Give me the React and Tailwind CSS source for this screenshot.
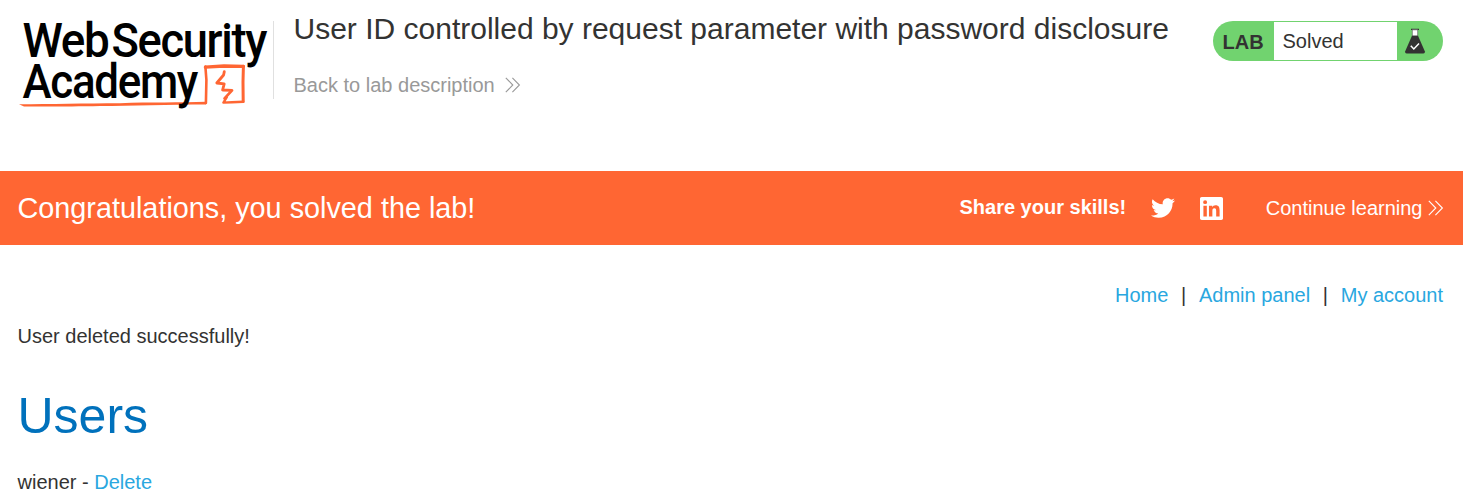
function DoubleChevron({ className }) {
  return (
    <svg className={className} width="16" height="16" viewBox="0 0 16 16" fill="none" stroke="currentColor" strokeWidth="1.1">
      <path d="M0.8 0.8 L7.8 8 L0.8 15.2" />
      <path d="M7.4 0.8 L14.4 8 L7.4 15.2" />
    </svg>
  );
}

function Logo() {
  return (
    <svg width="255" height="114" viewBox="18 0 255 114" className="block shrink-0">
      <g fill="none" stroke="#ff6633" strokeLinejoin="round" strokeLinecap="round">
        <path strokeWidth="2.6" d="M205.9 103 L206.4 80 L205.4 66.6" />
        <path strokeWidth="3.3" d="M205.4 67.2 L224 66 L243.4 66.3" />
        <path strokeWidth="3" d="M243.4 66.3 L243 82 L243.2 101.6" />
        <path strokeWidth="2.4" d="M243.2 101.8 L232 102.2 L223.4 102.6 L226.8 97.2" />
        <path strokeWidth="2.8" d="M224.3 71.6 L223.6 75 L216.8 83 L224.2 83.8 L222.6 90 L232 90.4 L224.6 98.4" />
      </g>
      <path fill="#ff6633" d="M19 104.2 C50 104 85 103.4 120 103.2 C150 102.2 180 102.6 206.5 101.8 L206 104.4 C170 104.4 130 106 100 106 C70 106.6 40 106.6 24 106.4 Z" />
      <g fontFamily="Roboto, sans-serif" fontWeight="500" fontSize="47.5" fill="#000">
        <text x="22.5" y="56.7" letterSpacing="-1.4" textLength="86" lengthAdjust="spacingAndGlyphs">Web</text>
        <text x="111.5" y="56.7" letterSpacing="-1.4" textLength="154.5" lengthAdjust="spacingAndGlyphs">Security</text>
        <text x="22.5" y="97.8" letterSpacing="-1.4" textLength="174.5" lengthAdjust="spacingAndGlyphs">Academy</text>
      </g>
    </svg>
  );
}

function Flask() {
  return (
    <svg width="22" height="26" viewBox="0 0 22 26" className="block">
      <path d="M7 1.4 H15" stroke="#333332" strokeWidth="1.2" />
      <path d="M8.3 1.8 H13.7 V8 H8.3 Z" fill="#fff" stroke="#666" strokeWidth="0.7" />
      <path d="M8 7.8 H14 L20.8 23.2 Q21.3 25.4 19.4 25.4 H2.6 Q0.7 25.4 1.2 23.2 Z" fill="#333332" />
      <path d="M6.8 17.8 L9.8 21 L15 15.4" fill="none" stroke="#fff" strokeWidth="1.5" />
    </svg>
  );
}

function Twitter() {
  return (
    <svg width="24" height="24" viewBox="0 0 24 24" fill="currentColor" className="block">
      <path d="M23.954 4.569c-.885.389-1.83.654-2.825.775 1.014-.611 1.794-1.574 2.163-2.723-.951.555-2.005.959-3.127 1.184-.896-.959-2.173-1.559-3.591-1.559-2.717 0-4.92 2.203-4.92 4.917 0 .39.045.765.127 1.124C7.691 8.094 4.066 6.13 1.64 3.161c-.427.722-.666 1.561-.666 2.475 0 1.71.87 3.213 2.188 4.096-.807-.026-1.566-.248-2.228-.616v.061c0 2.385 1.693 4.374 3.946 4.827-.413.111-.849.171-1.296.171-.314 0-.615-.03-.916-.086.631 1.953 2.445 3.377 4.604 3.417-1.68 1.319-3.809 2.105-6.102 2.105-.39 0-.779-.023-1.17-.067 2.189 1.394 4.768 2.209 7.557 2.209 9.054 0 13.999-7.496 13.999-13.986 0-.209 0-.42-.015-.63.961-.689 1.8-1.56 2.46-2.548l-.047-.02z" />
    </svg>
  );
}

function LinkedIn() {
  return (
    <svg width="23" height="23" viewBox="0 0 24 24" fill="currentColor" className="block">
      <path d="M20.447 20.452h-3.554v-5.569c0-1.328-.027-3.037-1.852-3.037-1.853 0-2.136 1.445-2.136 2.939v5.667H9.351V9h3.414v1.561h.046c.477-.9 1.637-1.85 3.37-1.85 3.601 0 4.267 2.37 4.267 5.455v6.286zM5.337 7.433a2.062 2.062 0 0 1-2.063-2.065 2.064 2.064 0 1 1 2.063 2.065zm1.782 13.019H3.555V9h3.564v11.452zM22.225 0H1.771C.792 0 0 .774 0 1.729v20.542C0 23.227.792 24 1.771 24h20.451C23.2 24 24 23.227 24 22.271V1.729C24 .774 23.2 0 22.222 0h.003z" />
    </svg>
  );
}

export default function App() {
  return (
    <div className="h-[503px] w-[1463px] overflow-hidden bg-white font-['Liberation_Sans',Arial,sans-serif] text-[20px] leading-6 text-[#333332]">
      <header className="flex h-[171px] items-start pl-[18px] pr-5">
        <Logo />
        <div className="mt-[21px] h-[78px] w-px bg-[#e0e0e0]" />
        <div className="ml-[19.5px] flex-1 whitespace-nowrap pt-[11px]">
          <h1 className="text-[30px] leading-9">User ID controlled by request parameter with password disclosure</h1>
          <a className="mt-[26px] flex items-center text-[#999999]">
            Back to lab description
            <DoubleChevron className="ml-[10px]" />
          </a>
        </div>
        <div className="mt-[21px] flex h-10 w-[230px] shrink-0 overflow-hidden rounded-[20px] bg-[#71d36f]">
          <div className="w-[61px] pl-[9.5px] pt-[9px] font-bold">LAB</div>
          <div className="my-px w-[123px] bg-white pl-[8.5px] pt-[7px]">Solved</div>
          <div className="pl-[7px] pt-[7px]">
            <Flask />
          </div>
        </div>
      </header>

      <section className="flex h-[74px] items-center bg-[#ff6633] pl-[17.5px] pr-[19px] text-white">
        <p className="flex-1 text-[28.8px]">Congratulations, you solved the lab!</p>
        <span className="-mt-0.5 font-bold">Share your skills!</span>
        <a className="ml-[25px]">
          <Twitter />
        </a>
        <a className="ml-[24.5px]">
          <LinkedIn />
        </a>
        <a className="ml-[43px] flex items-center">
          Continue learning
          <DoubleChevron className="ml-[5.5px]" />
        </a>
      </section>

      <nav className="flex justify-end whitespace-pre pr-5 pt-[38px]">
        <a className="text-[#29a7df]">Home</a>
        <span className="ml-[12.7px] mr-[12.7px]">|</span>
        <a className="text-[#29a7df]">Admin panel</a>
        <span className="ml-[12.7px] mr-[12.7px]">|</span>
        <a className="text-[#29a7df]">My account</a>
      </nav>

      <main className="pl-[17.5px]">
        <p className="mt-[17px]">User deleted successfully!</p>
        <h2 className="mt-[38px] text-[50px] leading-[60px] text-[#0071bc]">Users</h2>
        <p className="mt-[24px]">
          wiener - <a className="text-[#29a7df]">Delete</a>
        </p>
      </main>
    </div>
  );
}
